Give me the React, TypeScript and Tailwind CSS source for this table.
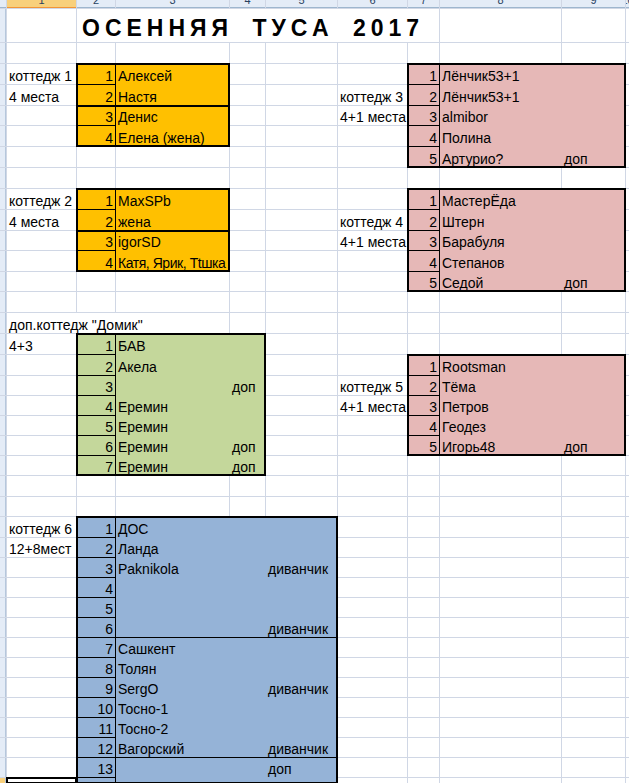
import { Fragment } from "react"

type Row = { n: string; name?: string; extra?: string; tight?: boolean }
type Group = { span: string; sep?: boolean; rows: Row[] }
type Block = {
  r: number
  c: number
  rs: number
  cs: number
  cls: string
  bg: string
  groupCls: string
  nameCls: string
  extra: boolean
  groups: Group[]
}
type Label = { r: number; c: number; cs: number; cls: string; text: string }

const blocks: Block[] = [
  {
    r: 4, c: 3, rs: 4, cs: 2,
    cls: "row-start-4 col-start-3 row-span-4 col-span-2",
    bg: "bg-[#ffc000]", groupCls: "col-start-2", nameCls: "", extra: false,
    groups: [
      { span: "row-span-2", rows: [{ n: "1", name: "Алексей" }, { n: "2", name: "Настя" }] },
      { span: "row-span-2", sep: true, rows: [{ n: "3", name: "Денис" }, { n: "4", name: "Елена (жена)" }] },
    ],
  },
  {
    r: 10, c: 3, rs: 4, cs: 2,
    cls: "row-start-10 col-start-3 row-span-4 col-span-2",
    bg: "bg-[#ffc000]", groupCls: "col-start-2", nameCls: "", extra: false,
    groups: [
      { span: "row-span-2", rows: [{ n: "1", name: "MaxSPb" }, { n: "2", name: "жена" }] },
      {
        span: "row-span-2",
        sep: true,
        rows: [{ n: "3", name: "igorSD" }, { n: "4", name: "Катя, Ярик, Тtшка", tight: true }],
      },
    ],
  },
  {
    r: 4, c: 8, rs: 5, cs: 3,
    cls: "row-start-4 col-start-8 row-span-5 col-span-3",
    bg: "bg-[#e6b8b7]", groupCls: "col-start-2 col-span-2", nameCls: "col-span-1", extra: true,
    groups: [
      {
        span: "row-span-5",
        rows: [
          { n: "1", name: "Лёнчик53+1" },
          { n: "2", name: "Лёнчик53+1" },
          { n: "3", name: "almibor" },
          { n: "4", name: "Полина" },
          { n: "5", name: "Артурио?", extra: "доп" },
        ],
      },
    ],
  },
  {
    r: 10, c: 8, rs: 5, cs: 3,
    cls: "row-start-10 col-start-8 row-span-5 col-span-3",
    bg: "bg-[#e6b8b7]", groupCls: "col-start-2 col-span-2", nameCls: "col-span-1", extra: true,
    groups: [
      {
        span: "row-span-5",
        rows: [
          { n: "1", name: "МастерЁда" },
          { n: "2", name: "Штерн" },
          { n: "3", name: "Барабуля" },
          { n: "4", name: "Степанов" },
          { n: "5", name: "Седой", extra: "доп" },
        ],
      },
    ],
  },
  {
    r: 18, c: 8, rs: 5, cs: 3,
    cls: "row-start-18 col-start-8 row-span-5 col-span-3",
    bg: "bg-[#e6b8b7]", groupCls: "col-start-2 col-span-2", nameCls: "col-span-1", extra: true,
    groups: [
      {
        span: "row-span-5",
        rows: [
          { n: "1", name: "Rootsman" },
          { n: "2", name: "Тёма" },
          { n: "3", name: "Петров" },
          { n: "4", name: "Геодез" },
          { n: "5", name: "Игорь48", extra: "доп" },
        ],
      },
    ],
  },
  {
    r: 17, c: 3, rs: 7, cs: 3,
    cls: "row-start-17 col-start-3 row-span-7 col-span-3",
    bg: "bg-[#c4d79b]", groupCls: "col-start-2 col-span-2", nameCls: "col-span-1", extra: true,
    groups: [
      {
        span: "row-span-7",
        rows: [
          { n: "1", name: "БАВ" },
          { n: "2", name: "Акела" },
          { n: "3", extra: "доп" },
          { n: "4", name: "Еремин" },
          { n: "5", name: "Еремин" },
          { n: "6", name: "Еремин", extra: "доп" },
          { n: "7", name: "Еремин", extra: "доп" },
        ],
      },
    ],
  },
  {
    r: 26, c: 3, rs: 14, cs: 4,
    cls: "row-start-26 col-start-3 row-span-14 col-span-4",
    bg: "bg-[#95b3d7]", groupCls: "col-start-2 col-span-3", nameCls: "col-span-2", extra: true,
    groups: [
      {
        span: "row-span-6",
        rows: [
          { n: "1", name: "ДОС" },
          { n: "2", name: "Ланда" },
          { n: "3", name: "Paknikola", extra: "диванчик" },
          { n: "4" },
          { n: "5" },
          { n: "6", extra: "диванчик" },
        ],
      },
      {
        span: "row-span-6",
        rows: [
          { n: "7", name: "Сашкент" },
          { n: "8", name: "Толян" },
          { n: "9", name: "SergO", extra: "диванчик" },
          { n: "10", name: "Тосно-1" },
          { n: "11", name: "Тосно-2" },
          { n: "12", name: "Вагорский", extra: "диванчик" },
        ],
      },
      {
        span: "row-span-2",
        rows: [{ n: "13", extra: "доп" }, { n: "" }],
      },
    ],
  },
]

const labels: Label[] = [
  { r: 4, c: 2, cs: 1, cls: "row-start-4 col-start-2", text: "коттедж 1" },
  { r: 5, c: 2, cs: 1, cls: "row-start-5 col-start-2", text: "4 места" },
  { r: 5, c: 7, cs: 1, cls: "row-start-5 col-start-7", text: "коттедж 3" },
  { r: 6, c: 7, cs: 1, cls: "row-start-6 col-start-7", text: "4+1 места" },
  { r: 10, c: 2, cs: 1, cls: "row-start-10 col-start-2", text: "коттедж 2" },
  { r: 11, c: 2, cs: 1, cls: "row-start-11 col-start-2", text: "4 места" },
  { r: 11, c: 7, cs: 1, cls: "row-start-11 col-start-7", text: "коттедж 4" },
  { r: 12, c: 7, cs: 1, cls: "row-start-12 col-start-7", text: "4+1 места" },
  { r: 16, c: 2, cs: 3, cls: "row-start-16 col-start-2 col-span-3", text: "доп.коттедж \"Домик\"" },
  { r: 17, c: 2, cs: 1, cls: "row-start-17 col-start-2", text: "4+3" },
  { r: 19, c: 7, cs: 1, cls: "row-start-19 col-start-7", text: "коттедж 5" },
  { r: 20, c: 7, cs: 1, cls: "row-start-20 col-start-7", text: "4+1 места" },
  { r: 26, c: 2, cs: 1, cls: "row-start-26 col-start-2", text: "коттедж 6" },
  { r: 27, c: 2, cs: 1, cls: "row-start-27 col-start-2", text: "12+8мест" },
]

// title row overflows over columns 2..7
const title = { r: 2, c: 3, rs: 1, cs: 6 }

const ROWS = 39
const COLS = 11
const cell = "flex items-end px-[2px] pb-[1px] whitespace-nowrap"

function SheetBlock({ b }: { b: Block }) {
  return (
    <div
      className={`${b.cls} grid grid-cols-subgrid grid-rows-subgrid bg-black outline-2 outline-solid outline-black outline-offset-[-1px]`}
    >
      {b.groups.map((g, gi) =>
        g.rows.map((row, ri) => (
          <Fragment key={`${gi}-${ri}`}>
            <div
              className={`col-start-1 ${b.bg} ${g.sep && ri === 0 ? "border-t border-black" : ""} flex items-end justify-end pr-[2px] pb-[1px]`}
            >
              {row.n}
            </div>
            {ri === 0 && (
              <div
                className={`${b.groupCls} ${g.span} ${b.bg} ${g.sep ? "border-t border-black" : ""} grid grid-cols-subgrid grid-rows-subgrid`}
              >
                {g.rows.map((rr, k) => (
                  <Fragment key={k}>
                    <div className={`${b.nameCls} ${cell} ${rr.tight ? "tracking-[-0.45px]" : ""}`}>{rr.name}</div>
                    {b.extra && <div className={cell}>{rr.extra}</div>}
                  </Fragment>
                ))}
              </div>
            )}
          </Fragment>
        ))
      )}
    </div>
  )
}

export default function App() {
  const taken = new Set<string>()
  const mark = (r: number, c: number, rs: number, cs: number) => {
    for (let i = r; i < r + rs; i++) for (let j = c; j < c + cs; j++) taken.add(`${i}-${j}`)
  }
  blocks.forEach((b) => mark(b.r, b.c, b.rs, b.cs))
  labels.forEach((l) => mark(l.r, l.c, 1, l.cs))
  mark(title.r, title.c, title.rs, title.cs)

  const base: JSX.Element[] = []
  for (let r = 1; r <= ROWS; r++) {
    for (let c = 1; c <= COLS; c++) {
      if (taken.has(`${r}-${c}`)) continue
      const key = `${r}-${c}`
      if (r === 1) {
        const sel = c === 2
        base.push(
          <div
            key={key}
            className={`${sel ? "bg-[#f8d07c] border-[#f29536]" : "bg-[#e4ecf7] border-[#9eb6ce]"} border-b overflow-hidden flex items-end justify-center text-[11px] leading-none text-[#27415f]`}
          >
            {c > 1 && <span className="mb-[1px]">{c - 1}</span>}
          </div>
        )
      } else if (c === 1) {
        // row header, cut off at the left edge of the window
        base.push(
          <div key={key} className={`${r === ROWS ? "bg-[#f8d07c]" : "bg-[#e4ecf7]"} border-r border-[#b5c7dc]`} />
        )
      } else if (r === ROWS && c === 2) {
        base.push(
          <div key={key} className="bg-white outline-2 outline-solid outline-black outline-offset-[-1px]" />
        )
      } else {
        base.push(<div key={key} className="bg-white" />)
      }
    }
  }

  return (
    <div className="w-[629px] h-[783px] overflow-hidden bg-white font-['Liberation_Sans',Arial,sans-serif] text-[14px] leading-none text-black">
      <div className="grid gap-px bg-[#d0d7e5] grid-cols-[6px_69px_38px_113px_35px_71px_69px_31px_121px_63px_3px] grid-rows-[8px_33px_20px_20px_20px_19px_20px_20px_20px_20px_20px_19px_20px_19px_20px_20px_20px_20px_19px_19px_19px_19px_19px_20px_19px_20px_19px_19px_19px_19px_19px_19px_19px_19px_19px_19px_19px_19px_5px]">
        <div className="row-start-2 col-start-3 col-span-6 bg-white flex items-end pl-[5px] pb-[2px] text-[23px] font-bold leading-none tracking-[5px] [word-spacing:8px] whitespace-nowrap">
          ОСЕННЯЯ ТУСА 2017
        </div>
        {labels.map((l, i) => (
          <div key={i} className={`${l.cls} bg-white ${cell}`}>
            {l.text}
          </div>
        ))}
        {blocks.map((b, i) => (
          <SheetBlock key={i} b={b} />
        ))}
        {base}
      </div>
    </div>
  )
}
